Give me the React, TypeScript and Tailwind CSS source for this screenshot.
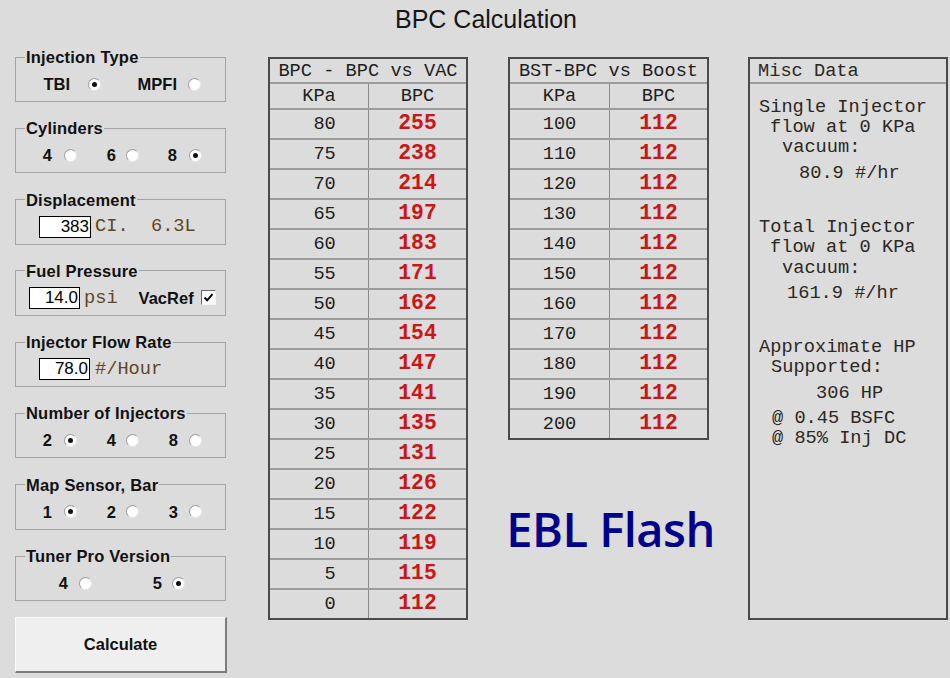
import React from "react";

const sans = "font-['Liberation_Sans',Arial,sans-serif]";
const mono = "font-['Liberation_Mono','Courier_New',monospace]";

const vacRows: [number, number][] = [
  [80, 255], [75, 238], [70, 214], [65, 197], [60, 183], [55, 171],
  [50, 162], [45, 154], [40, 147], [35, 141], [30, 135], [25, 131],
  [20, 126], [15, 122], [10, 119], [5, 115], [0, 112],
];

const boostRows: [number, number][] = [
  100, 110, 120, 130, 140, 150, 160, 170, 180, 190, 200,
].map((k) => [k, 112]);

function Radio({ on }: { on?: boolean }) {
  return (
    <span className="flex h-[13px] w-[13px] shrink-0 items-center justify-center rounded-full border border-t-[#9c9c9c] border-l-[#9c9c9c] border-r-[#e6e6e6] border-b-[#e6e6e6] bg-white">
      {on && <span className="h-[5px] w-[5px] rounded-full bg-[#111]" />}
    </span>
  );
}

function Opt({ label, w, gap, on }: { label: string; w: string; gap: string; on?: boolean }) {
  return (
    <div className={`flex items-center justify-end ${w}`}>
      <span className="font-bold">{label}</span>
      <span className={gap} />
      <Radio on={on} />
    </div>
  );
}

function Group({ title, children }: { title: string; children: React.ReactNode }) {
  return (
    <fieldset className="h-[54px] w-[211px] border border-[#a4a4a4]">
      <legend className="ml-[9px] px-[1px] text-[16.5px] font-bold leading-[18px] tracking-[0.2px] text-[#111]">
        {title}
      </legend>
      <div className="flex h-[22px] items-center pt-[7px] text-[16.5px] leading-none text-[#111] box-content">
        {children}
      </div>
    </fieldset>
  );
}

function Field({ value, w }: { value: string; w: string }) {
  return (
    <div className={`h-[22px] ${w} border border-black bg-white pr-[1px] text-right text-[17px] leading-[20px] text-black`}>
      {value}
    </div>
  );
}

function DataTable({ title, rows, w, left }: { title: string; rows: [number, number][]; w: string; left: string }) {
  return (
    <div className={`${w} border-2 border-[#4a4a4a] ${mono}`}>
      <div className="flex h-[23px] items-center justify-center whitespace-pre text-[18.67px] text-[#1e1e1e]">
        {title}
      </div>
      <div className="flex h-[26px] border-t-2 border-[#9c9c9c] text-[18.67px] text-[#1e1e1e]">
        <div className={`flex ${left} items-center justify-center border-r border-[#8a8a8a]`}>KPa</div>
        <div className="flex flex-1 items-center justify-center">BPC</div>
      </div>
      {rows.map(([k, v]) => (
        <div key={k} className="flex h-[30px] border-t-2 border-[#9c9c9c]">
          <div className={`flex ${left} items-center justify-center whitespace-pre border-r border-[#8a8a8a] text-[18.67px] text-[#1e1e1e]`}>
            {String(k).padStart(3, " ")}
          </div>
          <div className="flex flex-1 items-center justify-center text-[21.33px] font-bold text-[#cc1515]">
            {v}
          </div>
        </div>
      ))}
    </div>
  );
}

function Line({ text, cls }: { text: string; cls?: string }) {
  return <div className={`h-[20px] whitespace-pre leading-[20px] ${cls ?? ""}`}>{text}</div>;
}

export default function App() {
  return (
    <div className={`h-[678px] w-[950px] overflow-hidden bg-[#dcdcdc] ${sans}`}>
      <div className="h-[38px] pl-[22px] text-center text-[25px] leading-[38px] text-[#161616]">
        BPC Calculation
      </div>

      <div className="mt-[10px] flex items-start">
        {/* left controls */}
        <div className="ml-[15px] w-[212px]">
          <div className="flex flex-col gap-[17.3px]">
            <Group title="Injection Type">
              <Opt label="TBI" w="w-[85px]" gap="w-[18px]" on />
              <Opt label="MPFI" w="w-[100px]" gap="w-[11px]" />
            </Group>
            <Group title="Cylinders">
              <Opt label="4" w="w-[61px]" gap="w-[12px]" />
              <Opt label="6" w="w-[62px]" gap="w-[10px]" />
              <Opt label="8" w="w-[63px]" gap="w-[12px]" on />
            </Group>
            <Group title="Displacement">
              <div className="ml-[23px]">
                <Field value="383" w="w-[52px]" />
              </div>
              <span className={`ml-[4px] whitespace-pre text-[18.67px] text-[#5e4724] ${mono}`}>CI.  6.3L</span>
            </Group>
            <Group title="Fuel Pressure">
              <div className="ml-[13px]">
                <Field value="14.0" w="w-[51px]" />
              </div>
              <span className={`ml-[4px] text-[18.67px] text-[#5e4724] ${mono}`}>psi</span>
              <span className="ml-[21px] font-bold">VacRef</span>
              <span className="ml-[7px] flex h-[15px] w-[15px] items-center justify-center border border-t-[#6a6a6a] border-l-[#6a6a6a] border-r-[#f4f4f4] border-b-[#f4f4f4] bg-white">
                <svg width="11" height="11" viewBox="0 0 11 11">
                  <path d="M1.5 5.5 L4.2 8.3 L9.5 2.2" fill="none" stroke="#000" strokeWidth="2" />
                </svg>
              </span>
            </Group>
            <Group title="Injector Flow Rate">
              <div className="ml-[23px]">
                <Field value="78.0" w="w-[51px]" />
              </div>
              <span className={`ml-[5px] text-[18.67px] text-[#5e4724] ${mono}`}>#/Hour</span>
            </Group>
            <Group title="Number of Injectors">
              <Opt label="2" w="w-[61px]" gap="w-[12px]" on />
              <Opt label="4" w="w-[62px]" gap="w-[10px]" />
              <Opt label="8" w="w-[63px]" gap="w-[11px]" />
            </Group>
            <Group title="Map Sensor, Bar">
              <Opt label="1" w="w-[61px]" gap="w-[12px]" on />
              <Opt label="2" w="w-[62px]" gap="w-[10px]" />
              <Opt label="3" w="w-[63px]" gap="w-[11px]" />
            </Group>
            <Group title="Tuner Pro Version">
              <Opt label="4" w="w-[76px]" gap="w-[11px]" />
              <Opt label="5" w="w-[93px]" gap="w-[10px]" on />
            </Group>
          </div>
          <button className="mt-[15.6px] flex h-[56px] w-[212px] items-center justify-center border-t border-l border-t-[#fafafa] border-l-[#fafafa] border-r-2 border-b-2 border-r-[#7c7c7c] border-b-[#7c7c7c] bg-[#efefef] text-[16.5px] font-bold text-[#111]">
            Calculate
          </button>
        </div>

        {/* vacuum table */}
        <div className="ml-[41px] mt-[9px]">
          <DataTable title="BPC - BPC vs VAC" rows={vacRows} w="w-[200px]" left="w-[99px]" />
        </div>

        {/* boost table + logo */}
        <div className="ml-[40px] mt-[9px] w-[201px]">
          <DataTable title="BST-BPC vs Boost" rows={boostRows} w="w-[201px]" left="w-[100px]" />
          <div className="-mx-[10px] mt-[65px] whitespace-nowrap pl-[4px] text-center font-['Open_Sans',sans-serif] text-[47px] font-semibold leading-[48px] tracking-[-0.5px] text-[#00008b]">
            EBL Flash
          </div>
        </div>

        {/* misc */}
        <div className={`ml-[39px] mt-[9px] h-[563px] w-[200px] border-2 border-[#4a4a4a] ${mono} text-[18.67px] text-[#2c2822]`}>
          <div className="flex h-[23px] items-center pl-[8px]">Misc Data</div>
          <div className="h-[536px] border-t-2 border-[#9c9c9c] pl-[9px] pt-[13px]">
            <Line text="Single Injector" />
            <Line text="flow at 0 KPa" cls="ml-[11px]" />
            <Line text="vacuum:" cls="ml-[23px]" />
            <Line text="80.9 #/hr" cls="ml-[40px] mt-[6px]" />

            <Line text="Total Injector" cls="mt-[34px]" />
            <Line text="flow at 0 KPa" cls="ml-[11px]" />
            <Line text="vacuum:" cls="ml-[23px] mt-[1px]" />
            <Line text="161.9 #/hr" cls="ml-[28px] mt-[5px]" />

            <Line text="Approximate HP" cls="mt-[34px]" />
            <Line text="Supported:" cls="ml-[12px]" />
            <Line text="306 HP" cls="ml-[57px] mt-[6px]" />
            <Line text="@ 0.45 BSFC" cls="ml-[13px] mt-[5px]" />
            <Line text="@ 85% Inj DC" cls="ml-[13px]" />
          </div>
        </div>
      </div>
    </div>
  );
}
